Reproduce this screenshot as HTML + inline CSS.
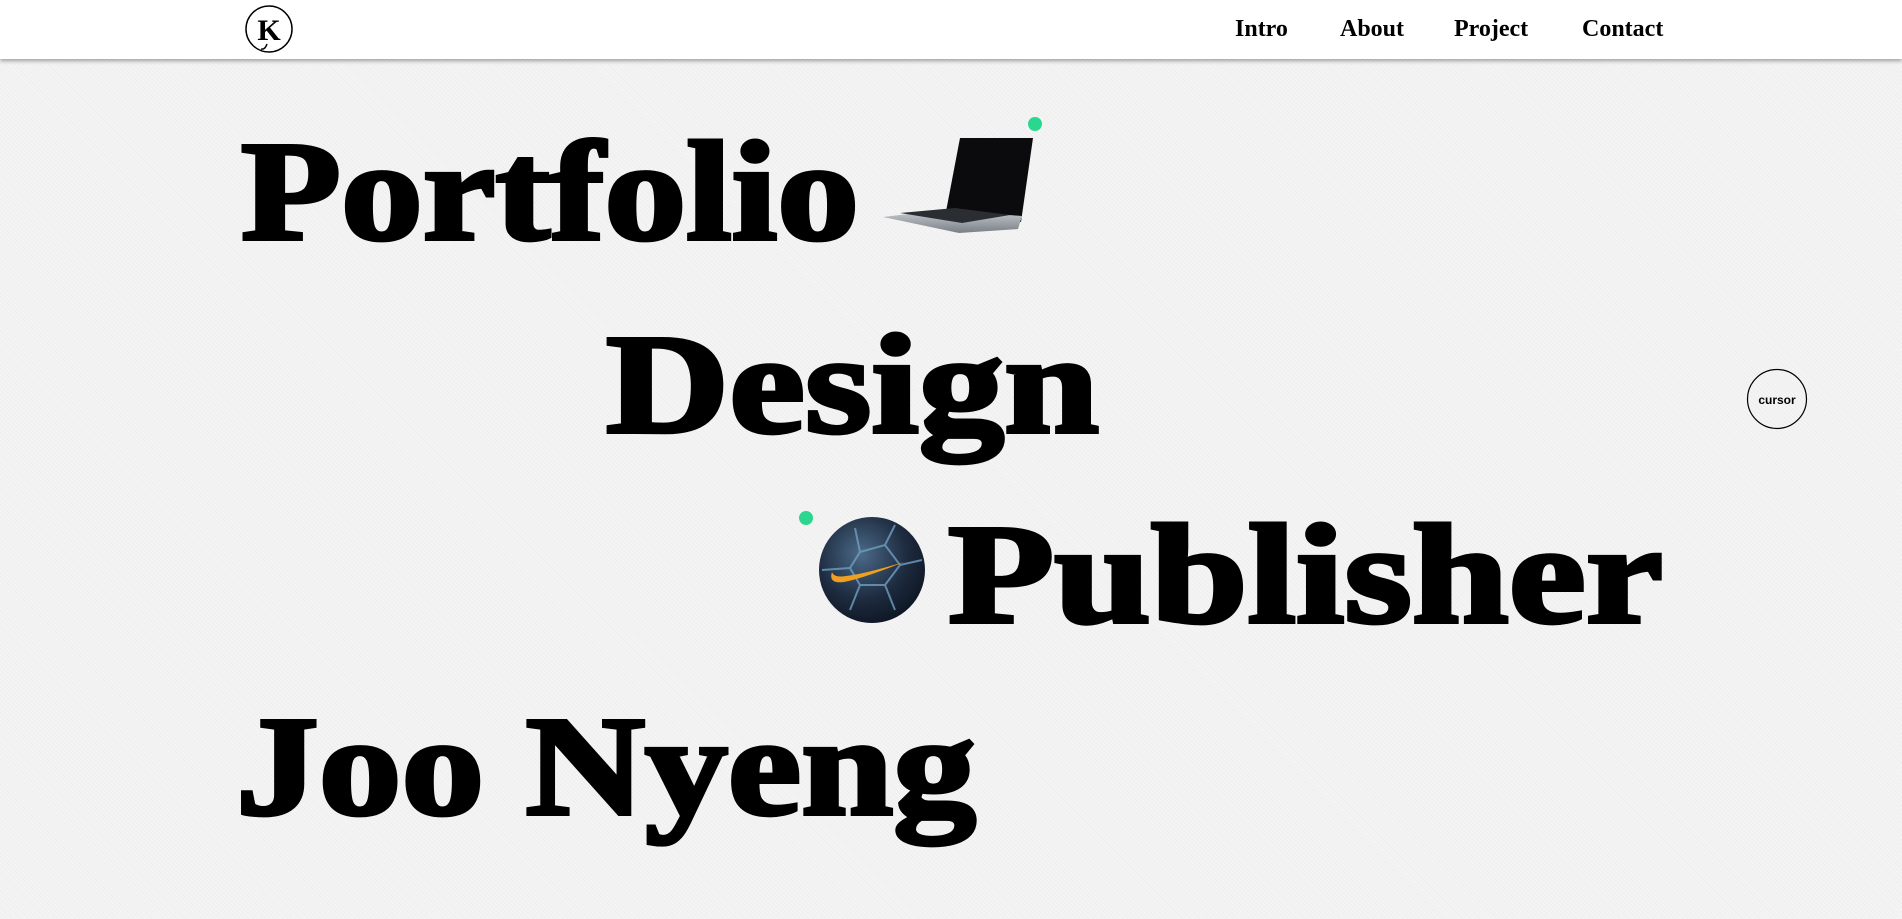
<!DOCTYPE html>
<html><head><meta charset="utf-8"><style>
html,body{margin:0;padding:0;width:1902px;height:919px;overflow:hidden;background:#f2f2f2;font-family:"Liberation Serif",serif}
.bg{position:absolute;inset:0;background:repeating-linear-gradient(45deg,#f4f4f4 0 2px,#eeeeee 2px 3px)}
nav{position:absolute;left:0;top:0;width:1902px;height:59px;background:#fff;box-shadow:0 2px 4px rgba(0,0,0,.35);z-index:2}
.nv{position:absolute;top:16px;font-weight:bold;font-size:24px;color:#000}
svg{position:absolute;left:0;top:0}
</style></head><body>
<div class="bg"></div>
<nav>
<svg width="320" height="59"><circle cx="269" cy="29" r="23" fill="none" stroke="#000" stroke-width="1.5"/><text x="269" y="40" font-family="Liberation Serif" font-weight="bold" font-size="30" text-anchor="middle">K</text><path d="M267 44 q-2 6 -6 5" stroke="#000" fill="none" stroke-width="1.5"/></svg>
<span class="nv" style="left:1235px">Intro</span>
<span class="nv" style="left:1340px">About</span>
<span class="nv" style="left:1454px">Project</span>
<span class="nv" style="left:1582px">Contact</span>
</nav>
<svg width="1902" height="919">
<defs>
<radialGradient id="ball" cx="0.4" cy="0.35" r="0.7"><stop offset="0" stop-color="#4b6a88"/><stop offset="0.6" stop-color="#1e2c40"/><stop offset="1" stop-color="#0d1522"/></radialGradient>
<linearGradient id="base" x1="0" y1="0" x2="0" y2="1"><stop offset="0" stop-color="#c8ccd2"/><stop offset="1" stop-color="#7a7f86"/></linearGradient>
</defs>
<g font-family="Liberation Serif" font-weight="bold" font-size="142" fill="#000" stroke="#000" stroke-width="4">
<text x="241" y="239" textLength="618" lengthAdjust="spacingAndGlyphs">Portfolio</text>
<text x="606" y="432" textLength="493" lengthAdjust="spacingAndGlyphs">Design</text>
<text x="948" y="622" textLength="715" lengthAdjust="spacingAndGlyphs">Publisher</text>
<text x="236" y="814" textLength="740" lengthAdjust="spacingAndGlyphs">Joo Nyeng</text>
</g>
<!-- laptop -->
<polygon points="960,138 1033,138 1021,222 944,222" fill="#0b0b0d"/>
<polygon points="944,210 1022,216 1018,229 959,233 883,217" fill="url(#base)"/>
<polygon points="900,213 955,208 1010,215 962,223" fill="#2a2d31"/>
<circle cx="1035" cy="124" r="7" fill="#2bd68f"/>
<!-- ball -->
<circle cx="872" cy="570" r="53" fill="url(#ball)"/>
<g stroke="#6f9fc2" stroke-width="2" fill="none" opacity="0.8">
<polygon points="860,552 885,545 900,565 885,585 860,585 850,568"/>
<path d="M860,552 L855,528 M885,545 L895,525 M900,565 L922,560 M885,585 L895,610 M860,585 L850,610 M850,568 L822,570"/>
</g>
<path d="M832 572 q-4 12 12 10 q20 -4 60 -20 q-40 12 -58 14 q-12 2 -14 -4z" fill="#f0a020"/>
<circle cx="806" cy="518" r="7" fill="#2bd68f"/>
<!-- cursor -->
<circle cx="1777" cy="399" r="29.5" fill="none" stroke="#000" stroke-width="1.2"/>
<text x="1777" y="404" font-family="Liberation Sans" font-weight="bold" font-size="12" text-anchor="middle" fill="#000">cursor</text>
</svg>
</body></html>
